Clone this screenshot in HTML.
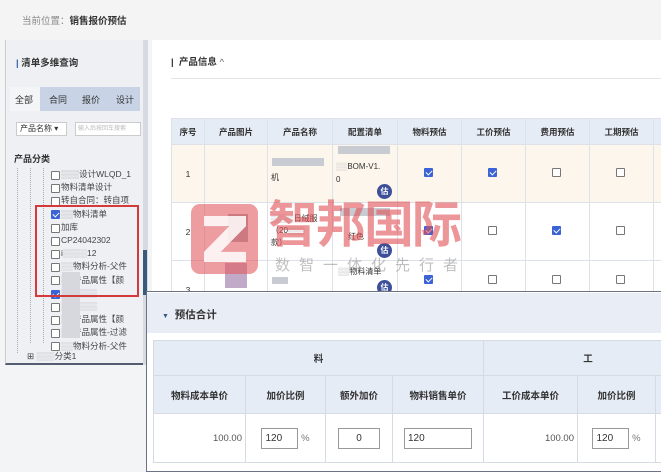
<!DOCTYPE html>
<html><head><meta charset="utf-8"><style>
*{margin:0;padding:0;box-sizing:border-box}
body{width:661px;height:472px;overflow:hidden;background:#f3f4f6;font-family:"Liberation Sans","Noto Sans CJK SC",sans-serif;font-size:9px;color:#333;position:relative}
.a{position:absolute}
.cb{position:absolute;width:9px;height:9px;border:1px solid #777;background:#fff;border-radius:1px}
.ck{background:#3b63d6;border-color:#3b63d6}
.ck::after{content:"";position:absolute;left:2px;top:0px;width:3px;height:5px;border:solid #fff;border-width:0 1.5px 1.5px 0;transform:rotate(45deg)}
.blur{position:absolute;background:#c9cbd3}
.gu{position:absolute;width:15px;height:15px;border-radius:50%;background:#3d4f9a;color:#fff;font-size:8px;font-weight:bold;text-align:center;line-height:15px}
table{border-collapse:collapse}
.t1 td,.t1 th{border:1px solid #dde1e8;text-align:center;font-size:8.5px}
.t1 th{background:#e6ecf5;font-weight:bold;height:26px}
.t2 td,.t2 th{border:1px solid #d6dbe3;text-align:center;font-size:9.5px}
.t2 th{background:#e6ecf5;font-weight:bold}
.inp{display:inline-block;border:1px solid #999;background:#fff;height:21px;line-height:19px;text-align:left;padding-left:3px;font-size:10px;vertical-align:middle}
</style></head><body>
<div class="a" style="left:0;top:0;width:661px;height:40px;background:#f4f4f5"></div>
<div class="a" style="left:22px;top:13px;font-size:9.5px;color:#888">当前位置：<b style="color:#333">销售报价预估</b></div>
<div class="a" style="left:5px;top:40px;width:140px;height:325px;background:#eef0f3;border-bottom:2px solid #555d70;border-left:1px solid #ccc"></div>
<div class="a" style="left:143px;top:40px;width:5px;height:325px;background:#d7dae0"></div>
<div class="a" style="left:143px;top:250px;width:4px;height:45px;background:#3a5a7a"></div>
<div class="a" style="left:16px;top:55px;font-size:9.5px;font-weight:bold"><span style="color:#3a64b0">|</span> 清单多维查询</div>
<div class="a" style="left:40px;top:87px;width:100px;height:24px;background:#c8d3e6"></div>
<div class="a" style="left:10px;top:87px;width:30px;height:24px;background:#f4f5f7"></div>
<div class="a" style="left:15px;top:93px;font-size:9px">全部</div>
<div class="a" style="left:49px;top:93px;font-size:9px">合同</div>
<div class="a" style="left:82px;top:93px;font-size:9px">报价</div>
<div class="a" style="left:116px;top:93px;font-size:9px">设计</div>
<div class="a" style="left:16px;top:122px;width:51px;height:14px;border:1px solid #ccc;background:#fff;font-size:8px;padding-left:3px;line-height:12px">产品名称 ▾</div>
<div class="a" style="left:75px;top:122px;width:66px;height:14px;border:1px solid #ccc;background:#fff;font-size:6px;color:#bbb;padding-left:2px;line-height:12px">输入后按回车搜索</div>
<div class="a" style="left:14px;top:152px;font-size:9px;font-weight:bold">产品分类</div>
<div class="a" style="left:17px;top:168px;width:0;height:185px;border-left:1px dotted #aaa"></div>
<div class="a" style="left:30px;top:168px;width:0;height:175px;border-left:1px dotted #aaa"></div>
<div class="a" style="left:43px;top:168px;width:0;height:175px;border-left:1px dotted #aaa"></div>
<div class="a" style="left:50px;top:168px;font-size:8.5px;line-height:13.2px;color:#444">
<div><span style="display:inline-block;width:11px"></span><span style="color:#bbb">▒▒▒</span>设计WLQD_1</div>
<div><span style="display:inline-block;width:11px"></span>物料清单设计</div>
<div><span style="display:inline-block;width:11px"></span>转自合同：转自项</div>
<div><span style="display:inline-block;width:11px"></span><span style="color:#bbb">▒▒</span>物料清单</div>
<div><span style="display:inline-block;width:11px"></span>加库</div>
<div><span style="display:inline-block;width:11px"></span>CP24042302</div>
<div><span style="display:inline-block;width:11px"></span>i<span style="color:#c4c6ce">▒▒▒▒</span>12</div>
<div><span style="display:inline-block;width:11px"></span><span style="color:#c4c6ce">▒▒</span>物料分析-父件</div>
<div><span style="display:inline-block;width:11px"></span><span style="color:#c4c6ce">▒▒</span>产品属性【颜</div>
<div><span style="display:inline-block;width:11px"></span><span style="color:#c4c6ce">▒▒▒▒▒▒</span></div>
<div><span style="display:inline-block;width:11px"></span><span style="color:#c4c6ce">▒▒▒▒▒▒</span></div>
<div><span style="display:inline-block;width:11px"></span><span style="color:#c4c6ce">▒▒</span>产品属性【颜</div>
<div><span style="display:inline-block;width:11px"></span><span style="color:#c4c6ce">▒▒</span>产品属性-过滤</div>
<div><span style="display:inline-block;width:11px"></span><span style="color:#c4c6ce">▒▒</span>物料分析-父件</div>
</div>
<div class="cb" style="left:51px;top:171px"></div><div class="cb" style="left:51px;top:184px"></div><div class="cb" style="left:51px;top:197px"></div>
<div class="cb ck" style="left:51px;top:210px"></div><div class="cb" style="left:51px;top:224px"></div><div class="cb" style="left:51px;top:237px"></div>
<div class="cb" style="left:51px;top:250px"></div><div class="cb" style="left:51px;top:263px"></div><div class="cb" style="left:51px;top:276px"></div>
<div class="cb ck" style="left:51px;top:290px"></div><div class="cb" style="left:51px;top:303px"></div><div class="cb" style="left:51px;top:316px"></div>
<div class="cb" style="left:51px;top:329px"></div><div class="cb" style="left:51px;top:342px"></div>
<div class="blur" style="left:62px;top:272px;width:18px;height:66px;background:#d6d8de"></div>
<div class="a" style="left:27px;top:350px;font-size:8.5px;color:#444">⊞ <span style="color:#c4c6ce">▒▒▒</span>分类1</div>
<div class="a" style="left:35px;top:205px;width:104px;height:92px;border:2px solid #d43a3a"></div>
<div class="a" style="left:152px;top:40px;width:509px;height:260px;background:#fff"></div>
<div class="a" style="left:171px;top:54px;font-size:9.5px;font-weight:bold">|&nbsp; 产品信息 <span style="font-weight:normal;color:#666">^</span></div>
<div class="a" style="left:171px;top:78px;width:490px;height:1px;background:#e2e4e8"></div>
<table class="t1 a" style="left:171px;top:118px;width:520px">
<tr><th style="width:33px">序号</th><th style="width:63px">产品图片</th><th style="width:65px">产品名称</th><th style="width:65px">配置清单</th><th style="width:64px">物料预估</th><th style="width:64px">工价预估</th><th style="width:64px">费用预估</th><th style="width:64px">工期预估</th><th></th></tr>
<tr style="height:58px;background:#fdf6ec"><td>1</td><td></td><td></td><td></td><td></td><td></td><td></td><td></td><td></td></tr>
<tr style="height:58px"><td>2</td><td></td><td></td><td></td><td></td><td></td><td></td><td></td><td></td></tr>
<tr style="height:58px"><td>3</td><td></td><td></td><td></td><td></td><td></td><td></td><td></td><td></td></tr>
</table>
<div class="blur" style="left:272px;top:158px;width:52px;height:8px"></div>
<div class="a" style="left:271px;top:172px;font-size:8px">机</div>
<div class="blur" style="left:338px;top:146px;width:52px;height:8px"></div>
<div class="a" style="left:336px;top:160px;font-size:8px;line-height:13px"><span style="color:#ccc">▒▒</span>BOM-V1.<br>0</div>
<div class="gu" style="left:377px;top:184px">估</div>
<div class="cb ck" style="left:424px;top:168px"></div><div class="cb ck" style="left:488px;top:168px"></div><div class="cb" style="left:552px;top:168px"></div><div class="cb" style="left:616px;top:168px"></div>
<div class="a" style="left:271px;top:213px;font-size:8px;line-height:12px"><span style="color:#bbb">▒▒▒▒</span>日绒服<br>（20<span style="color:#bbb">▒▒▒</span><br>款）</div>
<div class="blur" style="left:340px;top:208px;width:50px;height:8px"></div>
<div class="a" style="left:348px;top:231px;font-size:8px">红色</div>
<div class="gu" style="left:377px;top:243px">估</div>
<div class="cb ck" style="left:424px;top:226px"></div><div class="cb" style="left:488px;top:226px"></div><div class="cb ck" style="left:552px;top:226px"></div><div class="cb" style="left:616px;top:226px"></div>
<div class="blur" style="left:272px;top:277px;width:16px;height:7px"></div>
<div class="a" style="left:338px;top:266px;font-size:8px"><span style="color:#bbb">▒▒</span>物料清单</div>
<div class="gu" style="left:377px;top:280px">估</div>
<div class="cb ck" style="left:424px;top:275px"></div><div class="cb" style="left:488px;top:275px"></div><div class="cb" style="left:552px;top:275px"></div><div class="cb" style="left:616px;top:275px"></div>
<div class="blur" style="left:228px;top:214px;width:20px;height:28px;background:#b0a8b4"></div>
<div class="blur" style="left:225px;top:263px;width:22px;height:25px;background:#c0aac8"></div>
<div class="a" style="left:191px;top:204px;width:67px;height:70px;border-radius:9px;background:rgba(225,90,95,0.6)"></div>
<div class="a" style="left:204px;top:216px;width:42px;height:46px;background:rgba(255,255,255,0.85);clip-path:polygon(0 0,100% 0,100% 22%,40% 78%,100% 78%,100% 100%,0 100%,0 78%,60% 22%,0 22%)"></div>
<div class="a" style="left:268px;top:196px;font-size:50px;font-weight:bold;color:rgba(225,80,85,0.6);letter-spacing:-2px;line-height:58px">智邦国际</div>
<div class="a" style="left:275px;top:254px;font-size:15px;color:rgba(150,150,150,0.6);letter-spacing:9px">数智一体化先行者</div>
<div class="a" style="left:146px;top:291px;width:520px;height:181px;background:#fff;border:1.5px solid #6b7384"></div>
<div class="a" style="left:147px;top:293px;width:514px;height:40px;background:#e9eef6"></div>
<div class="a" style="left:162px;top:307px;font-size:10.5px;font-weight:bold"><span style="font-size:7px;color:#3a5a8a">▼</span>&nbsp; 预估合计</div>
<table class="t2 a" style="left:153px;top:340px;width:540px">
<tr style="height:35px"><th colspan="4">料</th><th colspan="3">工</th></tr>
<tr style="height:38px"><th style="width:92px">物料成本单价</th><th style="width:80px">加价比例</th><th style="width:67px">额外加价</th><th style="width:91px">物料销售单价</th><th style="width:94px">工价成本单价</th><th style="width:78px">加价比例</th><th></th></tr>
<tr style="height:49px"><td style="text-align:right;padding-right:3px;color:#555">100.00</td><td><span class="inp" style="width:37px">120</span> <span style="color:#777">%</span></td><td><span class="inp" style="width:42px;text-align:center;padding:0">0</span></td><td><span class="inp" style="width:68px">120</span></td><td style="text-align:right;padding-right:3px;color:#555">100.00</td><td><span class="inp" style="width:37px">120</span> <span style="color:#777">%</span></td><td></td></tr>
</table>
</body></html>
